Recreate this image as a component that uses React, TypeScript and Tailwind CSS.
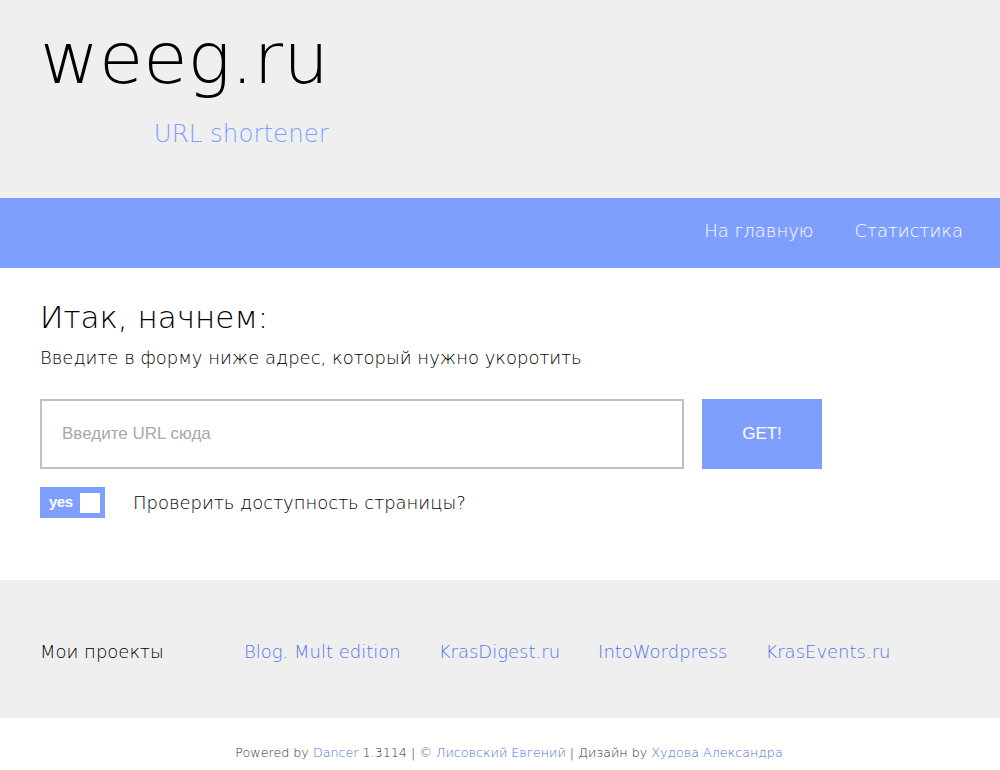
import React from 'react';

const font = "font-['DejaVu_Sans','Liberation_Sans',sans-serif]";
const narrow = "font-['Liberation_Sans_Narrow','Liberation_Sans',sans-serif]";

const projects = ['Blog. Mult edition', 'KrasDigest.ru', 'IntoWordpress', 'KrasEvents.ru'];

const App: React.FC = () => {
  return (
    <div className={`${font} font-extralight w-[1000px] min-h-[770px] bg-white text-black`}>
      {/* header */}
      <header className="h-[198px] bg-[#efefef] px-[40px] pt-[16px]">
        <div className="inline-flex flex-col items-end">
          <div className="text-[72px] leading-[84px] text-black">weeg.ru</div>
          <div className="text-[24.5px] leading-[30px] text-[#7f9fff] mt-[19px]">URL shortener</div>
        </div>
      </header>

      {/* nav */}
      <nav className="h-[70px] bg-[#7f9fff] flex items-center justify-end gap-[41px] pr-[37px] pb-[6px]">
        <a className="text-[18px] text-white">На главную</a>
        <a className="text-[18px] text-white">Статистика</a>
      </nav>

      {/* main */}
      <main className="h-[312px] px-[40px] pt-[30px]">
        <h1 className="text-[31px] leading-[38px]">Итак, начнем:</h1>
        <p className="text-[18px] leading-[24px] mt-[10px]">Введите в форму ниже адрес, который нужно укоротить</p>
        <div className="flex gap-[18px] mt-[29px]">
          <input
            className={`${narrow} w-[644px] h-[70px] border-2 border-[#c0c0c0] px-[20px] text-[17px] font-normal placeholder:text-[#a8a8a8] outline-none`}
            placeholder="Введите URL сюда"
          />
          <button className={`${narrow} w-[120px] h-[70px] bg-[#7f9fff] text-white text-[17px] font-normal`}>
            GET!
          </button>
        </div>
        <div className="flex items-center mt-[18px]">
          <div className="w-[65px] h-[31px] bg-[#7f9fff] flex items-center pl-[9px] pr-[5px] justify-between">
            <span className={`${narrow} text-white text-[15px] font-bold tracking-[-0.5px]`}>yes</span>
            <span className="w-[20px] h-[20px] bg-white" />
          </div>
          <span className="ml-[28px] text-[18px]">Проверить доступность страницы?</span>
        </div>
      </main>

      {/* projects */}
      <section className="h-[138px] bg-[#efefef] px-[40px] flex items-center pt-[4px]">
        <span className="text-[18px] w-[204px] text-black">Мои проекты</span>
        <div className="flex gap-[38px]">
          {projects.map((p) => (
            <a key={p} className="text-[18px] text-[#5577e6]">{p}</a>
          ))}
        </div>
      </section>

      {/* footer */}
      <footer className="h-[52px] flex justify-center pt-[27px] pl-[18px] text-[12.7px] leading-[16px] text-[#333]">
        <span>
          Powered by <a className="text-[#4a6ee0]">Dancer</a> 1.3114 | © <a className="text-[#4a6ee0]">Лисовский Евгений</a> | Дизайн by{' '}
          <a className="text-[#4a6ee0]">Худова Александра</a>
        </span>
      </footer>
    </div>
  );
};

export default App;
